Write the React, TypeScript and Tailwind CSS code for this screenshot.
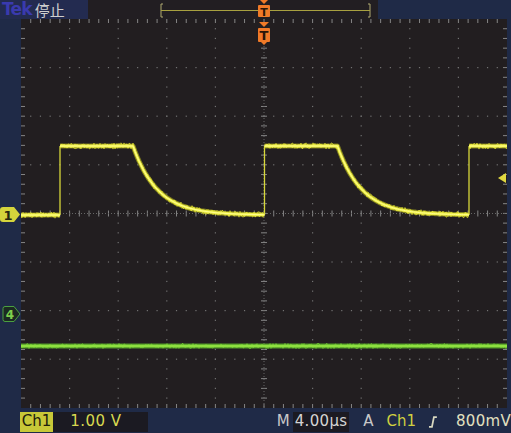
import React from 'react';

// plot geometry (px)
const W = 486;
const H = 389;
const DIV = 48.6;
const SUB = DIV / 5;

const LOW = 196;
const HIGH = 127;
const TAU = 24.5;
const RISES = [39, 243.5, 448];

const range = (n: number) => Array.from({ length: n }, (_, i) => i);

// ch1 level at a given x (plot coords)
function ch1(x: number): number {
    if (x < RISES[0]) return LOW;
    let r = RISES[0];
    RISES.forEach(v => { if (x >= v) r = v; });
    const t = x - r;
    if (t <= 73) return HIGH;
    return LOW - (LOW - HIGH) * Math.exp(-(t - 73) / TAU);
}

function levelPaths() {
    const parts: string[] = [`M0,${LOW} L${RISES[0]},${LOW}`];
    RISES.forEach((r, i) => {
        const top = Math.min(r + 73, W);
        let d = `M${r},${HIGH} L${top},${HIGH}`;
        if (r + 73 < W) {
            const next = RISES[i + 1] ?? W;
            for (let x = r + 75; x < next; x += 2) {
                d += ` L${x.toFixed(1)},${ch1(x).toFixed(1)}`;
            }
            d += ` L${next},${LOW}`;
        }
        parts.push(d);
    });
    return parts.join(' ');
}

// deterministic noise band
function fuzzPath(base: (x: number) => number, amp: number, seed: number) {
    let s = seed;
    const rnd = () => {
        s = (s * 9301 + 49297) % 233280;
        return s / 233280;
    };
    let d = '';
    for (let x = 0; x <= W; x += 1) {
        if (RISES.some(r => Math.abs(x - r) < 1)) { d += ` M${x + 1},${base(x + 1)}`; continue; }
        const y = base(x) + (rnd() - 0.5) * 2 * amp;
        d += `${d === '' ? 'M' : ' L'}${x},${y.toFixed(1)}`;
    }
    return d;
}

const Graticule: React.FC = () => {
    const dots: React.ReactNode[] = [];
    range(9).forEach(i => {
        const x = (i + 1) * DIV;
        if (i === 4) return;
        range(39).forEach(k => {
            dots.push(<rect key={`v${i}-${k}`} x={x - 0.6} y={(k + 1) * SUB - 0.6} width={1.2} height={1.2} fill="#727272" />);
        });
    });
    range(7).forEach(j => {
        const y = (j + 1) * DIV;
        if (j === 3) return;
        range(49).forEach(k => {
            dots.push(<rect key={`h${j}-${k}`} x={(k + 1) * SUB - 0.6} y={y - 0.6} width={1.2} height={1.2} fill="#727272" />);
        });
    });

    const ticks: React.ReactNode[] = [];
    range(39).forEach(k => {
        const y = (k + 1) * SUB;
        ticks.push(<line key={`cy${k}`} x1={W / 2 - 3} x2={W / 2 + 3} y1={y} y2={y} />);
        ticks.push(<line key={`ly${k}`} x1={0} x2={4} y1={y} y2={y} />);
        ticks.push(<line key={`ry${k}`} x1={W - 4} x2={W} y1={y} y2={y} />);
    });
    range(49).forEach(k => {
        const x = (k + 1) * SUB;
        ticks.push(<line key={`cx${k}`} x1={x} x2={x} y1={H / 2 - 3} y2={H / 2 + 3} />);
        ticks.push(<line key={`tx${k}`} x1={x} x2={x} y1={0} y2={4} />);
        ticks.push(<line key={`bx${k}`} x1={x} x2={x} y1={H - 4} y2={H} />);
    });

    return (
        <g>
            {dots}
            <g stroke="#858585" strokeWidth={1}>{ticks}</g>
            <line x1={W / 2} x2={W / 2} y1={0} y2={H} stroke="#666" strokeWidth={1} strokeDasharray="1 2" />
            <line x1={0} x2={W} y1={H / 2} y2={H / 2} stroke="#666" strokeWidth={1} strokeDasharray="1 2" />
        </g>
    );
};

const Plot: React.FC = () => {
    const levels = levelPaths();
    const fuzzA = fuzzPath(ch1, 3.2, 17);
    const fuzzB = fuzzPath(ch1, 2.4, 91);
    const green = fuzzPath(() => 327, 2.6, 5);
    return (
        <svg width={W} height={H} viewBox={`0 0 ${W} ${H}`} className="block shrink-0 bg-[#221e20]">
            <Graticule />
            {/* Ch4 */}
            <line x1={0} x2={W} y1={327} y2={327} stroke="#5fb82a" strokeWidth={5} opacity={0.8} />
            <path d={green} fill="none" stroke="#70c832" strokeWidth={1} opacity={0.8} />
            <line x1={0} x2={W} y1={327} y2={327} stroke="#8ee040" strokeWidth={2.5} />
            {/* Ch1 edges */}
            {RISES.map(r => (
                <line key={r} x1={r} x2={r} y1={LOW} y2={HIGH} stroke="#d8d83a" strokeWidth={1.3} />
            ))}
            {/* Ch1 levels */}
            <path d={levels} fill="none" stroke="#bcbc22" strokeWidth={5} opacity={0.6} strokeLinejoin="round" />
            <path d={fuzzA} fill="none" stroke="#d8d830" strokeWidth={1} opacity={0.75} />
            <path d={fuzzB} fill="none" stroke="#eeee40" strokeWidth={1} opacity={0.8} />
            <path d={levels} fill="none" stroke="#f0f048" strokeWidth={2.8} strokeLinejoin="round" />
            <path d={levels} fill="none" stroke="#ffff90" strokeWidth={1} strokeLinejoin="round" />
            {/* trigger point marker */}
            <g transform={`translate(${W / 2},0)`}>
                <polygon points="-5,3 5,3 0,8" fill="#f07a28" />
                <rect x={-6} y={9} width={12} height={14} rx={1} fill="#f07a28" />
                <polygon points="-3,23 3,23 0,26" fill="#f07a28" />
                <text x={0} y={21} textAnchor="middle" fontSize={13} fontWeight={700} fill="#2a1608" fontFamily="DejaVu Sans, sans-serif">T</text>
            </g>
            {/* trigger level */}
            <polygon points="477,159 485,154 485,164" fill="#e0d840" />
        </svg>
    );
};

const Sidebar: React.FC = () => (
    <svg width={21} height={H} viewBox={`0 0 21 ${H}`} className="block shrink-0 bg-[#1f2a47]">
        <path d="M3,188 L14,188 L20,195.5 L14,203 L3,203 Q0,203 0,200 L0,191 Q0,188 3,188 Z" fill="#d4d43c" />
        <text x={8} y={200.5} textAnchor="middle" fontSize={13} fontWeight={700} fill="#262610" fontFamily="DejaVu Sans, sans-serif">1</text>
        <path d="M5,287.5 L14,287.5 L20,295 L14,302.5 L5,302.5 Q3,302.5 3,300.5 L3,289.5 Q3,287.5 5,287.5 Z" fill="#1c2a22" stroke="#4aa040" strokeWidth={1} />
        <text x={10} y={300} textAnchor="middle" fontSize={12} fontWeight={700} fill="#7ed04c" fontFamily="DejaVu Sans, sans-serif">4</text>
    </svg>
);

export default function App() {
    return (
        <div className="w-[511px] h-[433px] bg-[#1f2a47] flex flex-col overflow-hidden relative font-['DejaVu_Sans',sans-serif]">
            {/* top bar */}
            <div className="h-[19px] flex shrink-0">
                <div className="w-[88px] bg-[#232b50] flex items-center pl-[2px] gap-[3px]">
                    <span className="text-[17px] font-bold leading-none text-[#3a3aae] tracking-[-0.8px]">Tek</span>
                    <span className="text-[15px] leading-none text-[#cfcfcf] font-['Noto_Sans_CJK_SC',sans-serif]">停止</span>
                </div>
                <div className="w-[290px] bg-[#221e22] flex items-center pl-[72px]">
                    <svg width={212} height={19} viewBox="0 0 212 19" className="block">
                        <path d="M3,4 L1,4 L1,17 L3,17" fill="none" stroke="#b0aa70" strokeWidth={1} />
                        <path d="M208,4 L210,4 L210,17 L208,17" fill="none" stroke="#b0aa70" strokeWidth={1} />
                        <line x1={1} x2={210} y1={10.5} y2={10.5} stroke="#a8a040" strokeWidth={1} />
                    </svg>
                </div>
                <div className="flex-1" />
            </div>
            {/* record view trigger marker */}
            <svg width={14} height={19} viewBox="0 0 14 19" className="absolute left-[257px] top-0">
                <polygon points="3,0 11,0 7,4" fill="#f07a28" />
                <rect x={1} y={5} width={12} height={12} rx={1} fill="#f07a28" />
                <text x={7} y={15.5} textAnchor="middle" fontSize={11} fontWeight={700} fill="#2a1608" fontFamily="DejaVu Sans, sans-serif">T</text>
            </svg>
            {/* screen */}
            <div className="flex shrink-0">
                <Sidebar />
                <Plot />
                <div className="flex-1" />
            </div>
            {/* bottom bar */}
            <div className="flex-1 flex items-center text-[15px] leading-none pt-[2px]">
                <div className="w-[20px]" />
                <div className="h-[20px] px-[2px] bg-[#c8c838] text-[#20200c] flex items-center">Ch1</div>
                <div className="h-[20px] w-[96px] bg-[#1b1a22] text-[#d8d850] flex items-center pl-[17px] tracking-[0.5px]">1.00 V</div>
                <div className="w-[131px]" />
                <span className="text-[#c8c8c8]">M</span>
                <div className="h-[20px] bg-[#1b1a22] text-[#d4d4d4] flex items-center ml-[3px] px-[2px] tracking-[0.3px]">4.00µs</div>
                <span className="text-[#c8c8c8] ml-[14px]">A</span>
                <span className="text-[#d0d040] ml-[13px]">Ch1</span>
                <svg width={10} height={14} viewBox="0 0 10 14" className="ml-[12px] block">
                    <path d="M1,12 L4,12 L6,2 L9,2" fill="none" stroke="#d8d8c0" strokeWidth={1.8} />
                </svg>
                <span className="text-[#e2e0c0] ml-[18px] tracking-[0.3px]">800mV</span>
            </div>
        </div>
    );
}
